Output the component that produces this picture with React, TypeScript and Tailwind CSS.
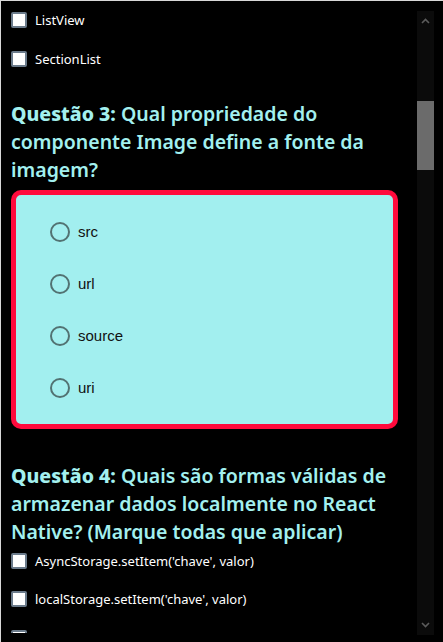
const labelFont = { fontFamily: '"Noto Sans", "Open Sans", sans-serif' };

function CheckRow({ label }: { label?: string }) {
  return (
    <div className="flex items-center gap-2 h-4 mb-[23px]">
      <span className="w-4 h-4 shrink-0 rounded-[2px] border-2 border-[#6b7b8b] bg-white" />
      {label && <span className="text-[13px] leading-4 text-white" style={labelFont}>{label}</span>}
    </div>
  );
}

function Question({ num, text, className }: { num: number; text: string; className?: string }) {
  return (
    <h3
      className={`text-[19.5px] leading-[28px] font-semibold text-[#a3f0ef] ${className ?? ""}`}
      style={labelFont}
    >
      <span className="font-extrabold">Questão {num}:</span> <span>{text}</span>
    </h3>
  );
}

function Radio({ label }: { label: string }) {
  return (
    <div className="flex items-center gap-2 h-[52px]">
      <span className="w-5 h-5 shrink-0 rounded-full border-2 border-[#527272]" />
      <span className="text-[15px] text-[#111]" style={{ fontFamily: '"Liberation Sans", Arial, sans-serif' }}>
        {label}
      </span>
    </div>
  );
}

export default function App() {
  return (
    <div className="w-[443px] h-[642px] bg-black border-t border-l border-[#d8d8d8] flex overflow-hidden">
      <div className="flex-1 pl-[10px] pt-[11px] pr-[19px] mb-[9px] overflow-hidden">
        <CheckRow label="ListView" />
        <CheckRow label="SectionList" />

        <Question
          num={3}
          text="Qual propriedade do componente Image define a fonte da imagem?"
          className="mt-[33px] mb-[6px]"
        />
        <div className="rounded-[10px] border-[5px] border-[#ff0a3c] bg-[#a2efef] pl-[34px] pt-[11px] pb-[10px]">
          {["src", "url", "source", "uri"].map((o) => (
            <Radio key={o} label={o} />
          ))}
        </div>

        <Question
          num={4}
          text="Quais são formas válidas de armazenar dados localmente no React Native? (Marque todas que aplicar)"
          className="mt-[33px] mb-[7px]"
        />
        <CheckRow label="AsyncStorage.setItem('chave', valor)" />
        <div className="-mt-px">
          <CheckRow label="localStorage.setItem('chave', valor)" />
          <CheckRow />
        </div>
      </div>

      {/* scrollbar */}
      <div className="w-[17px] mt-[10px] mb-[7px] mr-[9px] bg-[#0b0b0b] flex flex-col">
        <div className="h-[20px] flex items-center justify-center">
          <svg width="9" height="6" viewBox="0 0 9 6" fill="none">
            <path d="M1 5 L4.5 1.5 L8 5" stroke="#5c5c5c" strokeWidth="1.6" />
          </svg>
        </div>
        <div className="h-[70px]" />
        <div className="h-[69px] bg-[#6b6b6b]" />
        <div className="flex-1" />
        <div className="h-[20px] flex items-center justify-center">
          <svg width="9" height="6" viewBox="0 0 9 6" fill="none">
            <path d="M1 1 L4.5 4.5 L8 1" stroke="#5c5c5c" strokeWidth="1.6" />
          </svg>
        </div>
      </div>
    </div>
  );
}
